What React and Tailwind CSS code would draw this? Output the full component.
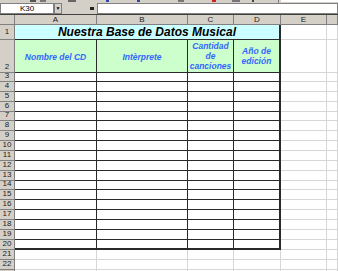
const HEIGHTS = {
  9: 'h-[9px]',
  10: 'h-[10px]',
}

const bodyRows = [9, 10, 10, 10, 9, 10, 10, 10, 10, 10, 10, 9, 10, 10, 10, 10, 10, 10]

function RowHead({ n, className = '' }) {
  return (
    <div
      className={`bg-[#d4d0c8] border-r border-b border-[#808080] text-[8px] leading-none flex items-end justify-center pb-[1px] text-[#222] ${className}`}
    >
      {n}
    </div>
  )
}

function Blank({ className = '' }) {
  return <div className={`border-r border-b border-[#d6d6d6] ${className}`} />
}

function Head({ label }) {
  return (
    <div className="h-[10px] bg-[#d4d0c8] border-r border-b border-[#808080] text-[8px] leading-none flex items-center justify-center text-[#222]">
      {label}
    </div>
  )
}

export default function App() {
  return (
    <div className="w-[338px] h-[271px] overflow-hidden bg-white font-['Liberation_Sans',Arial,sans-serif] text-black">
      {/* cropped toolbar strip */}
      <div className="h-[3px] bg-[#d4d0c8] flex items-start">
        <span className="ml-[30px] w-[6px] h-[2px] bg-[#555]" />
        <span className="ml-[4px] w-[6px] h-[2px] bg-[#777]" />
        <span className="ml-[22px] w-[8px] h-[2px] bg-[#666]" />
        <span className="ml-[30px] w-[3px] h-[2px] bg-[#3344aa]" />
        <span className="ml-[28px] w-[3px] h-[2px] bg-[#3344aa]" />
        <span className="ml-[38px] w-[6px] h-[2px] bg-[#777]" />
        <span className="ml-[28px] w-[4px] h-[2px] bg-[#cc2222]" />
        <span className="ml-[16px] w-[8px] h-[2px] bg-[#777]" />
        <span className="ml-[12px] w-[2px] h-[2px] bg-[#444]" />
        <span className="ml-[24px] w-[1px] h-[3px] bg-[#808080]" />
        <span className="ml-[2px] flex-1 h-[2px] bg-white" />
      </div>

      {/* formula bar */}
      <div className="h-[12px] bg-[#d4d0c8] flex items-stretch border-b border-[#404040]">
        <div className="w-[54px] bg-white border border-[#808080] text-[8px] leading-none flex items-center justify-center">
          K30
        </div>
        <div className="w-[8px] bg-[#d4d0c8] border border-[#808080] text-[5px] flex items-center justify-center leading-none">
          ▼
        </div>
        <div className="w-[26px]" />
        <div className="w-[8px] flex items-center justify-center">
          <span className="w-[4px] h-[3px] bg-[#222]" />
        </div>
        <div className="flex-1 ml-[1px] bg-white border border-[#808080]" />
      </div>

      <div className="grid grid-cols-[15px_82px_91px_46px_47px_46px_1fr]">
        {/* column headers */}
        <Head label="" />
        <Head label="A" />
        <Head label="B" />
        <Head label="C" />
        <Head label="D" />
        <Head label="E" />
        <Head label="" />

        {/* row 1 */}
        <RowHead n={1} className="h-[15px] pb-[3px]" />
        <div className="col-span-4 h-[15px] bg-[#ccffff] border-r-2 border-b border-[#2a2a2a] flex items-center justify-center text-[12px] font-bold italic leading-none">
          Nuestra Base de Datos Musical
        </div>
        <Blank className="h-[15px]" />
        <Blank className="h-[15px]" />

        {/* row 2 */}
        <RowHead n={2} className="h-[33px]" />
        <div className="h-[33px] bg-[#ccffcc] border-r border-b border-[#2a2a2a] flex items-center justify-center text-[8.5px] font-bold italic text-[#3366ff] leading-none pt-[2px]">
          Nombre del CD
        </div>
        <div className="h-[33px] bg-[#ccffcc] border-r border-b border-[#2a2a2a] flex items-center justify-center text-[8.5px] font-bold italic text-[#3366ff] leading-none pt-[2px]">
          Intèrprete
        </div>
        <div className="h-[33px] bg-[#ccffcc] border-r border-b border-[#2a2a2a] flex flex-col items-center justify-center text-[8.5px] font-bold italic text-[#3366ff] leading-[10px]">
          <span>Cantidad</span>
          <span>de</span>
          <span>canciones</span>
        </div>
        <div className="h-[33px] bg-[#ccffcc] border-r-2 border-b border-[#2a2a2a] flex flex-col items-center justify-center text-[8.5px] font-bold italic text-[#3366ff] leading-[10px]">
          <span>Año de</span>
          <span>edición</span>
        </div>
        <Blank className="h-[33px]" />
        <Blank className="h-[33px]" />

        {/* rows 3-20 */}
        {bodyRows.map((h, i) => {
          const n = i + 3
          const last = n === 20
          const hc = HEIGHTS[h]
          const bottom = last ? 'border-b-2' : 'border-b'
          return [
            <RowHead key={`h${n}`} n={n} className={hc} />,
            <div key={`a${n}`} className={`${hc} border-r ${bottom} border-[#2a2a2a]`} />,
            <div key={`b${n}`} className={`${hc} border-r ${bottom} border-[#2a2a2a]`} />,
            <div key={`c${n}`} className={`${hc} border-r ${bottom} border-[#2a2a2a]`} />,
            <div key={`d${n}`} className={`${hc} border-r-2 ${bottom} border-[#2a2a2a]`} />,
            <Blank key={`e${n}`} className={hc} />,
            <Blank key={`f${n}`} className={hc} />,
          ]
        })}

        {/* rows 21-23 */}
        {[21, 22, 23].map((n) => [
          <RowHead key={`h${n}`} n={n < 23 ? n : ''} className="h-[10px]" />,
          <Blank key={`a${n}`} className="h-[10px]" />,
          <Blank key={`b${n}`} className="h-[10px]" />,
          <Blank key={`c${n}`} className="h-[10px]" />,
          <Blank key={`d${n}`} className="h-[10px]" />,
          <Blank key={`e${n}`} className="h-[10px]" />,
          <Blank key={`f${n}`} className="h-[10px]" />,
        ])}
      </div>
    </div>
  )
}
